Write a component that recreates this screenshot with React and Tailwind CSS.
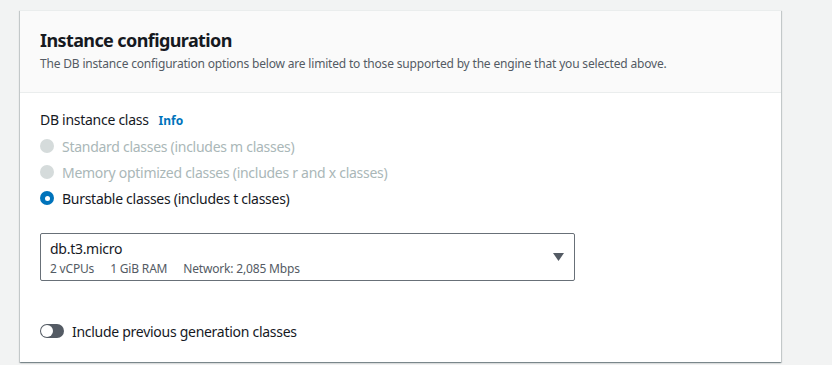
import React, { useState } from 'react';

const font = { fontFamily: '"Noto Sans", "Liberation Sans", sans-serif' };

const Radio = ({ label, checked, disabled }) => (
  <label className="flex items-center h-[26px]">
    {checked ? (
      <span className="w-[14px] h-[14px] rounded-full bg-[#0073bb] flex items-center justify-center">
        <span className="w-[5px] h-[5px] rounded-full bg-white"></span>
      </span>
    ) : (
      <span className={`w-[14px] h-[14px] rounded-full ${disabled ? 'bg-[#d5dbdb]' : 'border-2 border-[#aab7b8]'}`}></span>
    )}
    <span className={`ml-2 text-[14px] tracking-[-0.28px] ${disabled ? 'text-[#aab7b8]' : 'text-[#16191f]'}`}>{label}</span>
  </label>
);

export default function App() {
  const [prevGen, setPrevGen] = useState(false);

  return (
    <div className="w-[832px] h-[365px] bg-[#f2f3f3] pt-[10px] pl-[20px] overflow-hidden" style={font}>
      <div className="w-[761px] bg-white border-t border-[#eaeded] shadow-[0_1px_1px_0_rgba(0,28,36,0.3),1px_1px_1px_0_rgba(0,28,36,0.15),-1px_1px_1px_0_rgba(0,28,36,0.15)]">
        <div className="bg-[#fafafa] border-b border-[#eaeded] px-[20px] pt-[18px] pb-[20px]">
          <h2 className="text-[18px] leading-[22px] font-bold tracking-[-0.6px] text-[#16191f]">Instance configuration</h2>
          <p className="mt-[5px] text-[12px] leading-[16px] tracking-[-0.18px] text-[#545b64]">
            The DB instance configuration options below are limited to those supported by the engine that you selected above.
          </p>
        </div>
        <div className="px-[20px] pt-[17px] pb-[21px]">
          <div className="flex items-baseline h-[20px] text-[14px] leading-[20px] tracking-[-0.28px] text-[#16191f]">
            DB instance class
            <span className="ml-[10px] text-[12px] font-bold tracking-normal text-[#0073bb]">Info</span>
          </div>
          <div className="mt-[3px]">
            <Radio label="Standard classes (includes m classes)" disabled />
            <Radio label="Memory optimized classes (includes r and x classes)" disabled />
            <Radio label="Burstable classes (includes t classes)" checked />
          </div>
          <div className="mt-[22px] w-[535px] h-[48px] border border-[#687078] rounded-[2px] flex items-center justify-between pl-[9px] pr-[10px]">
            <div className="self-start pt-[5px]">
              <div className="text-[14px] leading-[20px] tracking-[-0.28px] text-[#16191f]">db.t3.micro</div>
              <div className="flex gap-[16px] text-[12px] leading-[20px] tracking-[-0.18px] text-[#545b64]">
                <span>2 vCPUs</span>
                <span>1 GiB RAM</span>
                <span>Network: 2,085 Mbps</span>
              </div>
            </div>
            <svg width="11" height="8" viewBox="0 0 11 8">
              <polygon points="0,0 11,0 5.5,8" fill="#545b64" />
            </svg>
          </div>
          <div className="mt-[40px] flex items-center h-[20px]">
            <button
              onClick={() => setPrevGen(!prevGen)}
              className={`w-[24px] h-[14px] rounded-full flex items-center px-[1px] ${prevGen ? 'bg-[#0073bb] justify-end' : 'bg-[#545b64] justify-start'}`}
            >
              <span className="w-[12px] h-[12px] rounded-full bg-white"></span>
            </button>
            <span className="ml-[8px] text-[14px] tracking-[-0.28px] text-[#16191f]">Include previous generation classes</span>
          </div>
        </div>
      </div>
    </div>
  );
}
